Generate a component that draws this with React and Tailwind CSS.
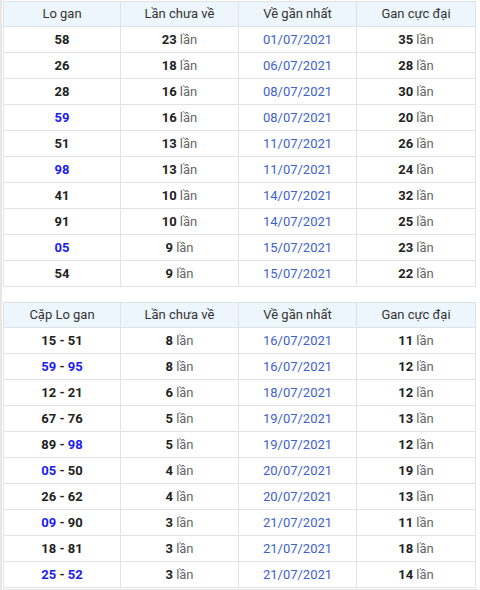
import React from 'react';

const loGan = [
  { lo: [['58', false]], chua: 23, date: '01/07/2021', max: 35 },
  { lo: [['26', false]], chua: 18, date: '06/07/2021', max: 28 },
  { lo: [['28', false]], chua: 16, date: '08/07/2021', max: 30 },
  { lo: [['59', true]], chua: 16, date: '08/07/2021', max: 20 },
  { lo: [['51', false]], chua: 13, date: '11/07/2021', max: 26 },
  { lo: [['98', true]], chua: 13, date: '11/07/2021', max: 24 },
  { lo: [['41', false]], chua: 10, date: '14/07/2021', max: 32 },
  { lo: [['91', false]], chua: 10, date: '14/07/2021', max: 25 },
  { lo: [['05', true]], chua: 9, date: '15/07/2021', max: 23 },
  { lo: [['54', false]], chua: 9, date: '15/07/2021', max: 22 },
];

const capLoGan = [
  { lo: [['15', false], ['51', false]], chua: 8, date: '16/07/2021', max: 11 },
  { lo: [['59', true], ['95', true]], chua: 8, date: '16/07/2021', max: 12 },
  { lo: [['12', false], ['21', false]], chua: 6, date: '18/07/2021', max: 12 },
  { lo: [['67', false], ['76', false]], chua: 5, date: '19/07/2021', max: 13 },
  { lo: [['89', false], ['98', true]], chua: 5, date: '19/07/2021', max: 12 },
  { lo: [['05', true], ['50', false]], chua: 4, date: '20/07/2021', max: 19 },
  { lo: [['26', false], ['62', false]], chua: 4, date: '20/07/2021', max: 13 },
  { lo: [['09', true], ['90', false]], chua: 3, date: '21/07/2021', max: 11 },
  { lo: [['18', false], ['81', false]], chua: 3, date: '21/07/2021', max: 18 },
  { lo: [['25', true], ['52', true]], chua: 3, date: '21/07/2021', max: 14 },
];

const Num = ({ value, blue }) => (
  <span className={blue ? 'text-[#1b1bf5]' : 'text-[#222]'}>{value}</span>
);

const Lan = ({ n }) => (
  <>
    <span className="font-bold text-[#222]">{n}</span>{' '}
    <span className="text-[#666]">lần</span>
  </>
);

const GanTable = ({ first, rows }) => (
  <table className="w-[472px] border-collapse table-fixed text-[13px]">
    <colgroup>
      <col className="w-[117px]" />
      <col className="w-[118px]" />
      <col className="w-[118px]" />
      <col className="w-[119px]" />
    </colgroup>
    <thead>
      <tr className="h-[25px] bg-[#eef6fd]">
        {[first, 'Lần chưa về', 'Về gần nhất', 'Gan cực đại'].map((h) => (
          <th key={h} className="border border-[#dfe3e8] font-normal text-[#333] text-center">
            {h}
          </th>
        ))}
      </tr>
    </thead>
    <tbody>
      {rows.map((r, i) => (
        <tr key={i} className="h-[26px]">
          <td className="border border-[#e2e2e2] text-center font-bold">
            {r.lo.map(([v, blue], j) => (
              <React.Fragment key={j}>
                {j > 0 && <span className="text-[#222]"> - </span>}
                <Num value={v} blue={blue} />
              </React.Fragment>
            ))}
          </td>
          <td className="border border-[#e2e2e2] text-center">
            <Lan n={r.chua} />
          </td>
          <td className="border border-[#e2e2e2] text-center text-[#3d5fd0]">{r.date}</td>
          <td className="border border-[#e2e2e2] text-center">
            <Lan n={r.max} />
          </td>
        </tr>
      ))}
    </tbody>
  </table>
);

export default function App() {
  return (
    <div className="w-[480px] h-[590px] bg-white overflow-hidden" style={{ fontFamily: 'Roboto, "Noto Sans", sans-serif' }}>
      <div className="border-l-2 border-b-2 border-[#e6e6e6] pl-px pt-px pb-px w-[478px]">
        <GanTable first="Lo gan" rows={loGan} />
        <div className="h-[15px]" />
        <GanTable first="Cặp Lo gan" rows={capLoGan} />
      </div>
    </div>
  );
}
